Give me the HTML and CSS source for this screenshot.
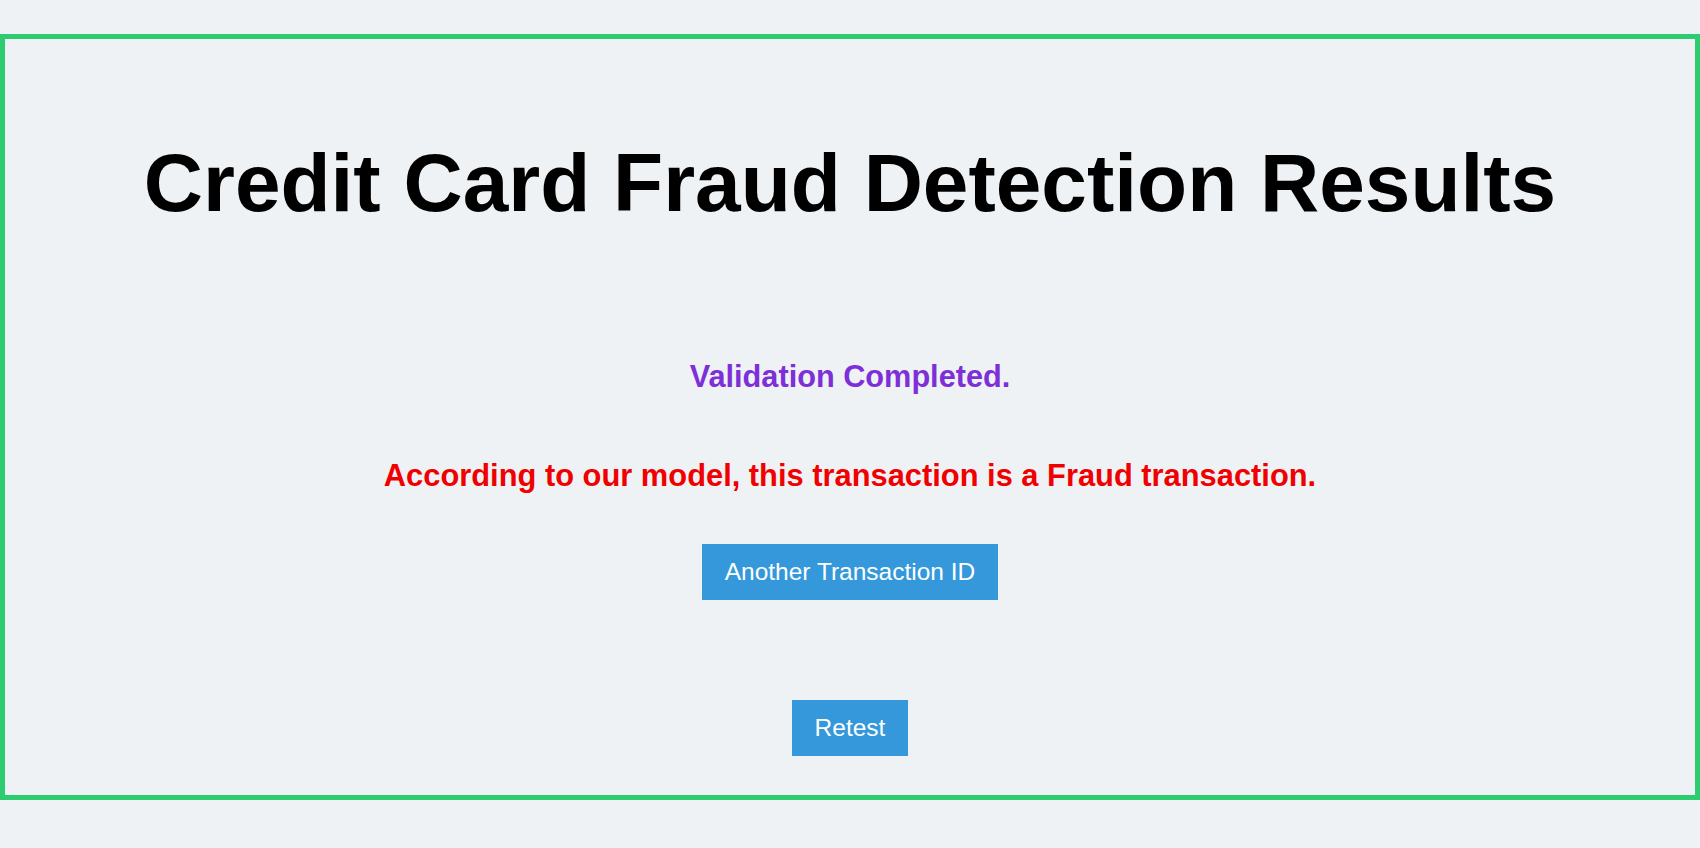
FILE: index.html
```html
<!DOCTYPE html>
<html lang="en">
<head>
<meta charset="utf-8">
<title>Credit Card Fraud Detection Results</title>
<link rel="stylesheet" href="styles.css">
</head>
<body>
  <main class="panel">
    <h1 class="title">Credit Card Fraud Detection Results</h1>
    <p class="status">Validation Completed.</p>
    <p class="verdict">According to our model, this transaction is a Fraud transaction.</p>
    <button class="btn btn-another" type="button">Another Transaction ID</button>
    <button class="btn btn-retest" type="button">Retest</button>
  </main>
</body>
</html>
```

FILE: styles.css
```css
html, body {
  margin: 0;
  padding: 0;
  background: #eef2f5;
}

body {
  font-family: "Liberation Sans", Arial, sans-serif;
  padding-top: 34px;
  height: 848px;
  box-sizing: border-box;
}

.panel {
  box-sizing: border-box;
  width: 1700px;
  height: 766px;
  border: 5px solid #2ecc71;
  display: flex;
  flex-direction: column;
  align-items: center;
  padding-top: 97px;
}

.title {
  margin: 0;
  font-size: 82px;
  font-weight: bold;
  color: #000;
  line-height: 94px;
}

.status {
  margin: 129px 0 0;
  font-size: 30.7px;
  font-weight: bold;
  color: #7f2fd8;
  line-height: 36px;
}

.verdict {
  margin: 63px 0 0;
  font-size: 30.85px;
  font-weight: bold;
  color: #f00000;
  line-height: 36px;
}

.btn {
  font-family: "Liberation Sans", Arial, sans-serif;
  font-size: 24.5px;
  line-height: 28px;
  color: #ffffff;
  background: #3498db;
  border: none;
  border-radius: 0;
  padding: 14px 23px;
  cursor: pointer;
}

.btn-another {
  margin-top: 50px;
}

.btn-retest {
  margin-top: 100px;
}
```
